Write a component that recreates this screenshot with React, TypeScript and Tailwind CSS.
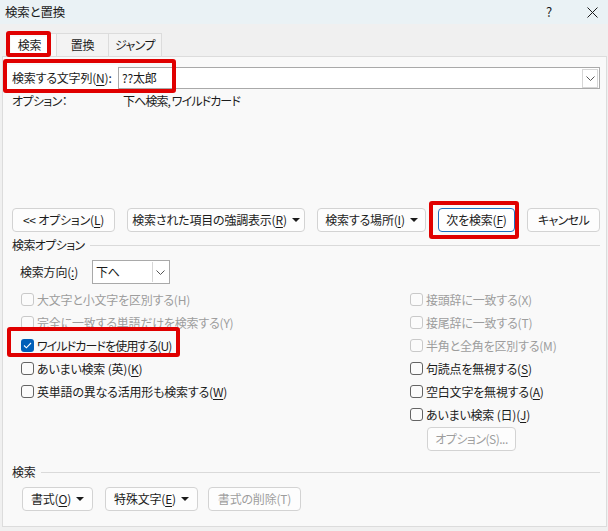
import React from "react";
import clsx from "clsx";

// Word-style "検索と置換" dialog, search tab with options expanded

const U: React.FC<{ children: React.ReactNode }> = ({ children }) => (
  <span className="underline underline-offset-[2px] decoration-[1px]">{children}</span>
);

const Chevron = () => (
  <svg width="9" height="5" viewBox="0 0 9 5" fill="none">
    <polyline points="0.5,0.5 4.5,4.5 8.5,0.5" stroke="#555" strokeWidth="1" />
  </svg>
);

const Caret = () => (
  <svg width="8" height="4" viewBox="0 0 8 4" className="ml-[5px]">
    <polygon points="0,0 8,0 4,4" fill="#1b1b1b" />
  </svg>
);

interface BtnProps {
  className?: string;
  disabled?: boolean;
  primary?: boolean;
  arrow?: boolean;
  children: React.ReactNode;
}

const Btn: React.FC<BtnProps> = ({ className, disabled, primary, arrow, children }) => (
  <div
    className={clsx(
      "h-[24px] flex items-center justify-center rounded-[4px] border bg-[#fdfdfd] shrink-0",
      primary ? "border-[#1f6fc0] bg-white" : "border-[#d3d3d3]",
      disabled && "text-[#9d9d9d]",
      className
    )}
  >
    <span>{children}</span>
    {arrow && <Caret />}
  </div>
);

interface CheckProps {
  label: React.ReactNode;
  disabled?: boolean;
  checked?: boolean;
  tight?: boolean;
}

const Check: React.FC<CheckProps> = ({ label, disabled, checked, tight }) => (
  <div className="h-[23px] flex items-center">
    {checked ? (
      <div className="w-[13px] h-[13px] rounded-[3px] bg-[#005fb8] flex items-center justify-center">
        <svg width="9" height="7" viewBox="0 0 9 7" fill="none">
          <polyline points="1,3.5 3.4,5.8 8,1" stroke="#fff" strokeWidth="1.1" />
        </svg>
      </div>
    ) : (
      <div
        className={clsx(
          "w-[13px] h-[13px] rounded-[3px] border bg-[#fbfbfb]",
          disabled ? "border-[#c9c9c9]" : "border-[#646464]"
        )}
      />
    )}
    <span
      className={clsx("ml-[3px]", disabled && "text-[#9d9d9d]", tight && "tracking-[-0.9px]")}
    >
      {label}
    </span>
  </div>
);

const RedBox: React.FC<{ className: string }> = ({ className }) => (
  <div
    className={clsx(
      "absolute border-[4px] border-[#e00000] rounded-[3px] pointer-events-none",
      className
    )}
  />
);

export default function App() {
  return (
    <div className="relative w-[608px] h-[531px] overflow-hidden bg-[#f0f0f0] text-[12px] leading-[16px] tracking-[-0.2px] text-[#1b1b1b] font-['Noto_Sans_CJK_JP','Noto_Sans',sans-serif] [font-feature-settings:'palt']">
      {/* title bar */}
      <div className="h-[24px] bg-[#eaf2f5] flex items-center pl-[5px]">
        <span className="text-[12.5px]">検索と置換</span>
        <span className="ml-auto mr-[35px] text-[13px]">?</span>
        <svg width="11" height="11" viewBox="0 0 11 11" className="mr-[10px]">
          <path d="M0.5 0.5 L10.5 10.5 M10.5 0.5 L0.5 10.5" stroke="#1b1b1b" strokeWidth="1" />
        </svg>
      </div>

      {/* tabs */}
      <div className="flex pl-[6px] pt-[9px]">
        <div className="w-[51px] h-[23px] bg-[#f9f9f9] border border-b-0 border-[#dcdcdc] flex items-center pl-[4px]">
          <div className="w-[37px] h-[17px] bg-white flex items-center justify-center">検索</div>
        </div>
        <div className="w-[52px] h-[23px] bg-[#f3f3f3] border-t border-r border-[#dcdcdc] flex items-center justify-center">
          置換
        </div>
        <div className="w-[53px] h-[23px] bg-[#f3f3f3] border-t border-r border-[#dcdcdc] flex items-center justify-center tracking-[-0.6px]">
          ジャンプ
        </div>
      </div>

      {/* panel */}
      <div className="ml-[2px] w-[605px] h-[471px] bg-[#f9f9f9] border border-[#dcdcdc] pl-[9px] pr-[6px]">
        <div className="mt-[10px] h-[22px] flex items-center">
          <div className="w-[111px] -ml-[5px] pl-[5px] h-[26px] bg-white flex items-center shrink-0">
            検索する文字列(<U>N</U>):
          </div>
          <div className="flex-1 h-[22px] bg-white border border-[#a9a9a9] flex items-center pl-[3px] pr-[1px]">
            <span>??太郎</span>
            <div className="ml-auto w-[16px] h-[19px] border border-[#d6d6d6] bg-white flex items-center justify-center">
              <Chevron />
            </div>
          </div>
        </div>

        <div className="mt-[3px] h-[18px] flex items-center">
          <span className="w-[111px] tracking-[-0.6px]">オプション：</span>
          <span className="tracking-[-0.9px]">下へ検索, ワイルドカード</span>
        </div>

        <div className="mt-[98px] flex justify-between">
          <Btn className="w-[103px]">&lt;&lt; オプション(<U>L</U>)</Btn>
          <Btn className="w-[178px]" arrow>
            検索された項目の強調表示(<U>R</U>)
          </Btn>
          <Btn className="w-[109px]" arrow>
            検索する場所(<U>I</U>)
          </Btn>
          <Btn className="w-[77px]" primary>
            次を検索(<U>F</U>)
          </Btn>
          <Btn className="w-[73px]">
            <span className="tracking-[-0.6px]">キャンセル</span>
          </Btn>
        </div>

        <div className="mt-[5px] h-[16px] flex items-center">
          <span className="tracking-[-0.6px]">検索オプション</span>
          <div className="flex-1 ml-[5px] h-px bg-[#dadada]" />
        </div>

        <div className="mt-[7px] h-[24px] flex items-center pl-[8px]">
          <span className="w-[72px]">
            検索方向(<U>:</U>)
          </span>
          <div className="w-[78px] h-[24px] bg-white border border-[#a9a9a9] flex items-center pl-[3px] pr-[1px]">
            <span>下へ</span>
            <div className="ml-auto w-[16px] h-[20px] border-l border-[#d6d6d6] flex items-center justify-center">
              <Chevron />
            </div>
          </div>
        </div>

        <div className="mt-[4px] flex items-start">
          <div className="w-[398px] pl-[9px] flex flex-col">
            <Check disabled label="大文字と小文字を区別する(H)" />
            <Check disabled label="完全に一致する単語だけを検索する(Y)" />
            <Check checked tight label={<>ワイルドカードを使用する(<U>U</U>)</>} />
            <Check label={<>あいまい検索 (英)(<U>K</U>)</>} />
            <Check label={<>英単語の異なる活用形も検索する(<U>W</U>)</>} />
          </div>
          <div className="flex flex-col">
            <Check disabled label="接頭辞に一致する(X)" />
            <Check disabled label="接尾辞に一致する(T)" />
            <Check disabled label="半角と全角を区別する(M)" />
            <Check label={<>句読点を無視する(<U>S</U>)</>} />
            <Check label={<>空白文字を無視する(<U>A</U>)</>} />
            <Check label={<>あいまい検索 (日)(<U>J</U>)</>} />
            <Btn className="mt-[1px] ml-[17px] w-[89px]" disabled>
              <span className="tracking-[-0.5px]">オプション(S)...</span>
            </Btn>
          </div>
        </div>

        <div className="mt-[13px] h-[16px] flex items-center">
          <span>検索</span>
          <div className="flex-1 ml-[5px] h-px bg-[#dadada]" />
        </div>

        <div className="mt-[7px] ml-[10px] flex">
          <Btn className="w-[71px]" arrow>
            書式(<U>O</U>)
          </Btn>
          <Btn className="w-[93px] ml-[12px]" arrow>
            特殊文字(<U>E</U>)
          </Btn>
          <Btn className="w-[93px] ml-[10px]" disabled>
            書式の削除(T)
          </Btn>
        </div>
      </div>

      {/* annotation boxes */}
      <RedBox className="left-[6px] top-[31px] w-[45px] h-[26px]" />
      <RedBox className="left-[3px] top-[59px] w-[173px] h-[34px]" />
      <RedBox className="left-[429px] top-[201px] w-[90px] h-[38px]" />
      <RedBox className="left-[7px] top-[327px] w-[173px] h-[30px]" />
    </div>
  );
}
